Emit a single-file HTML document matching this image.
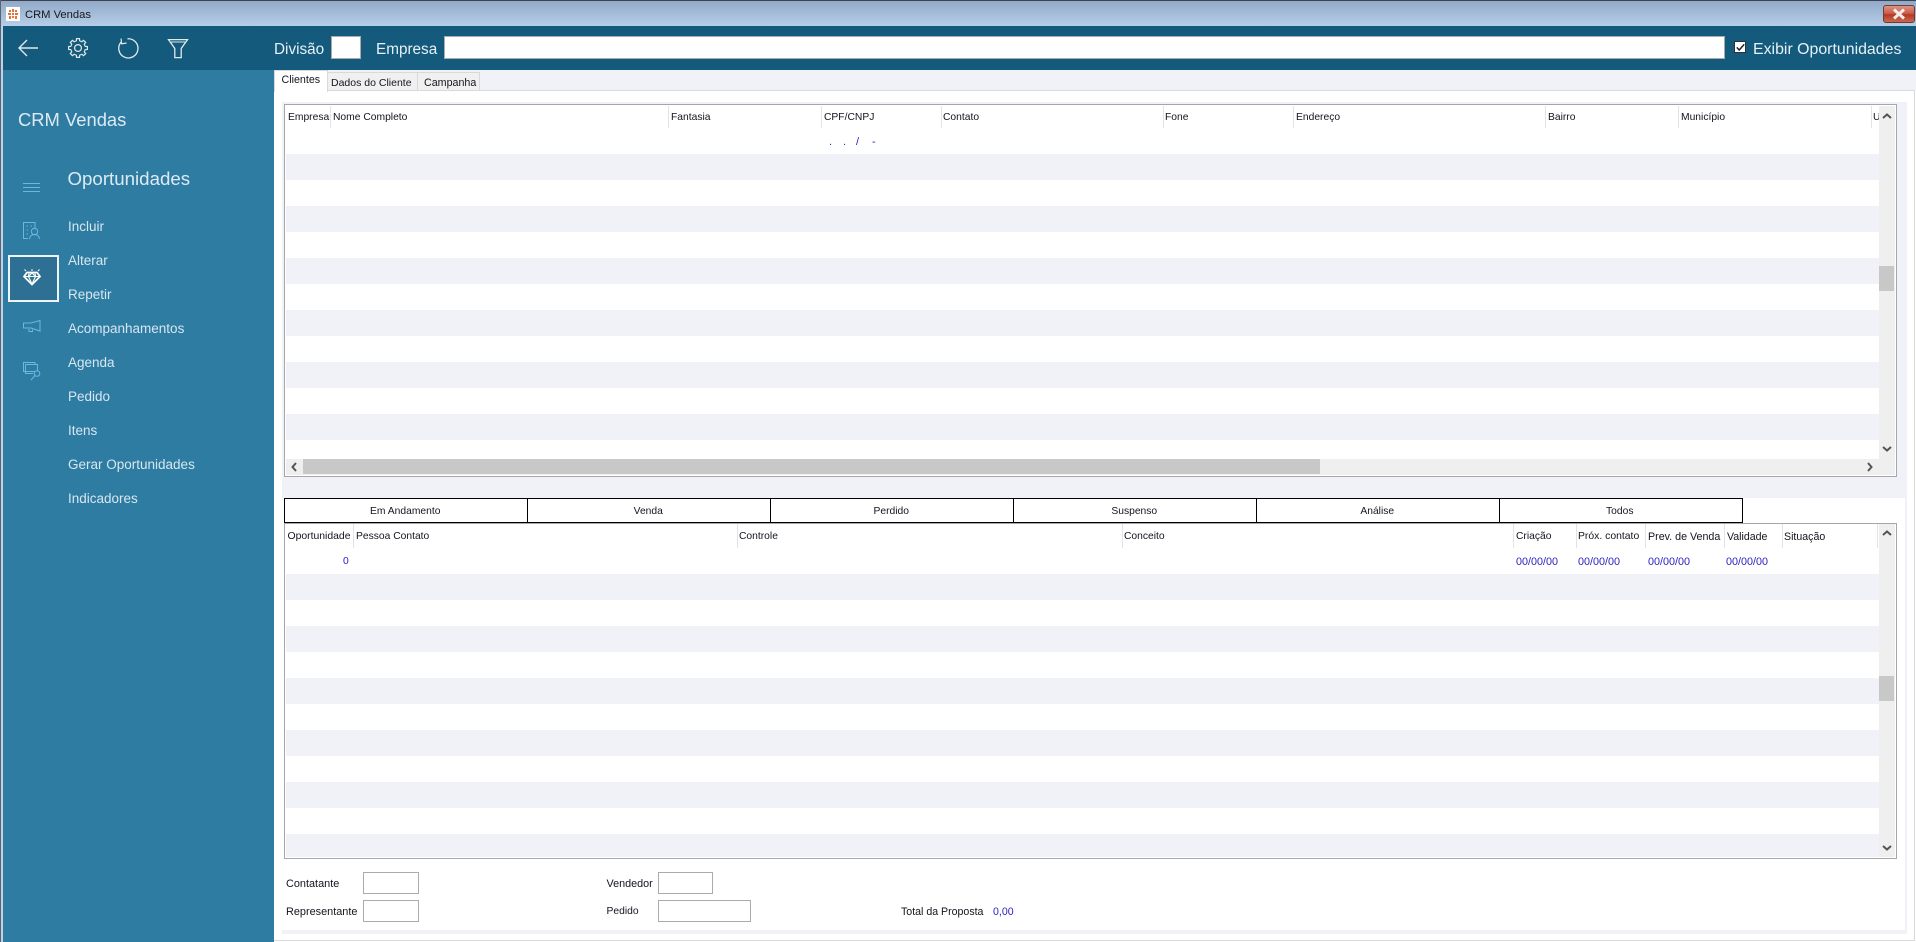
<!DOCTYPE html>
<html lang="pt"><head><meta charset="utf-8"><title>CRM Vendas</title>
<style>
html,body{margin:0;padding:0;background:#fff}
#a{position:relative;width:1916px;height:942px;overflow:hidden;background:#fff;font-family:"Liberation Sans",sans-serif}
#a div,#a span,#a svg{position:absolute}
.t{white-space:nowrap;font-size:10.3px;line-height:14px;height:14px;color:#14141e}
.b{color:#2a1fc0}
.d{font-size:10.8px}
.l{font-size:10.9px}
.s{white-space:nowrap;font-size:13.5px;line-height:18px;height:18px;color:#d6e7f0;left:68px;margin-top:1px}
.h{white-space:nowrap;line-height:20px;height:20px;color:#e6f1f6;font-size:15.3px}
.sep{width:1px;background:#e3e3e3}
.inp{background:#fff;border:1px solid #ababab;box-sizing:border-box}
.btn{box-sizing:border-box;border:1.5px solid #000;background:#fff;top:498px;height:24.5px;width:244.5px;text-align:center;font-size:10.3px;line-height:26px;color:#14141e;text-indent:-2px}
.f{background:#f1f2f8}
</style></head><body><div id="a">

<!-- window frame / title -->
<div style="left:0;top:0;width:1916px;height:26px;background:linear-gradient(#8fa8c6,#b7cee8)"></div>
<div style="left:0;top:0;width:1916px;height:1px;background:#3d4350"></div>
<div style="left:0;top:26px;width:3px;height:916px;background:#bcd2ea"></div>
<div style="left:0;top:0;width:1px;height:942px;background:#5a626e"></div>
<div style="left:6px;top:7px;width:14px;height:14px;background:#fff"></div>
<svg style="left:6px;top:7px" width="14" height="14" viewBox="0 0 14 14"><path d="M3 3h2v2H3zM6 2h2v3H6zM9 3h2v2H9zM2 6h3v2H2zM6 6h2v2H6zM9 6h3v2H9zM3 9h2v3H3zM6 9h2v2H6zM9 9h2v3H9z" fill="#e8703a"/></svg>
<div class="t" style="left:25px;top:8px;font-size:11.2px;color:#15181f">CRM Vendas</div>
<div style="left:1883px;top:5px;width:32px;height:18px;box-sizing:border-box;border:1px solid #6e3b36;border-radius:3px;background:linear-gradient(#dd9384 0,#c9604b 45%,#b43a24 55%,#c96a50 100%)"></div>
<svg style="left:1883px;top:5px" width="32" height="18" viewBox="0 0 32 18"><path d="M11 4.5 21 13.5M21 4.5 11 13.5" stroke="#f4ecea" stroke-width="3"/></svg>

<!-- header -->
<div style="left:3px;top:26px;width:1913px;height:44px;background:#145a7c"></div>
<svg style="left:0;top:26px" width="220" height="44" viewBox="0 26 220 44" fill="none" stroke="#e4e8ea">
<path d="M38 48H19M27 40 19 48 27 56" stroke-width="1.4"/>
<g transform="translate(78 48)" stroke-width="1.2">
<circle r="3.4"/>
<path d="M-2.76-6.65-1.66-7.21-1.49-9.38H1.49L1.66-7.21 2.76-6.65"/>
<path transform="rotate(45)" d="M-2.76-6.65-1.66-7.21-1.49-9.38H1.49L1.66-7.21 2.76-6.65"/>
<path transform="rotate(90)" d="M-2.76-6.65-1.66-7.21-1.49-9.38H1.49L1.66-7.21 2.76-6.65"/>
<path transform="rotate(135)" d="M-2.76-6.65-1.66-7.21-1.49-9.38H1.49L1.66-7.21 2.76-6.65"/>
<path transform="rotate(180)" d="M-2.76-6.65-1.66-7.21-1.49-9.38H1.49L1.66-7.21 2.76-6.65"/>
<path transform="rotate(225)" d="M-2.76-6.65-1.66-7.21-1.49-9.38H1.49L1.66-7.21 2.76-6.65"/>
<path transform="rotate(270)" d="M-2.76-6.65-1.66-7.21-1.49-9.38H1.49L1.66-7.21 2.76-6.65"/>
<path transform="rotate(315)" d="M-2.76-6.65-1.66-7.21-1.49-9.38H1.49L1.66-7.21 2.76-6.65"/>
</g>
<path d="M127.5 38.8A9.6 9.6 0 1 1 121 42.2" stroke-width="1.3"/>
<path d="M121 38.6 121.6 43.8 126.6 43" stroke-width="1.2"/>
<path d="M168.5 39.6H187.5L181.2 48.5V57.6H174.8V48.5Z" stroke-width="1.3"/>
<path d="M171 42H185" stroke-width="1"/>
</svg>
<div class="h" style="left:274px;top:40px">Divisão</div>
<div class="inp" style="left:331px;top:36px;width:30px;height:23px"></div>
<div class="h" style="left:376px;top:40px">Empresa</div>
<div class="inp" style="left:444px;top:36px;width:1281px;height:23px"></div>
<div style="left:1734px;top:41px;background:#fff;border:1px solid #28333c;width:10px;height:10px"></div>
<svg style="left:1734px;top:41px" width="13" height="13" viewBox="0 0 13 13"><path d="M2.8 6.4 5.2 9 10.2 3.4" fill="none" stroke="#222" stroke-width="1.5"/></svg>
<div class="h" style="left:1753px;top:40px;font-size:15.9px">Exibir Oportunidades</div>

<!-- sidebar -->
<div style="left:3px;top:70px;width:271px;height:872px;background:#2f7ca3"></div>
<div class="h" style="left:18px;top:109px;font-size:18.4px;line-height:22px;height:22px;color:#dcebf3">CRM Vendas</div>
<div class="h" style="left:67.5px;top:168px;font-size:18.7px;line-height:22px;height:22px;color:#dcebf3">Oportunidades</div>
<div style="left:8px;top:255px;width:51px;height:47px;box-sizing:border-box;border:2px solid #eef3f6;background:#2d7094"></div>
<svg style="left:0;top:170px" width="60" height="220" viewBox="0 170 60 220" fill="none" stroke="#6cb6e6" stroke-width="1">
<path d="M23 183.5H40M23 187.5H40M23 191.5H40"/>
<path d="M23.5 239V222.5H35V229M26.5 226h1.5M30.5 226h1.5M26.5 230h1.5M26.5 234h1.5M23.5 238.5H28"/>
<circle cx="34.5" cy="231.5" r="3.2"/>
<path d="M29.5 239C30 235.5 32 234.5 34.5 234.5S39 235.5 39.5 239"/>
<path d="M40 320.5 31 323H23.5V328H31L40 331ZM29 329V331.5H32.5V329.5"/>
<path d="M35 371.5H23.5V362.5H35V364.5M25.5 364.5H37.5V371M25.5 364.5V373.5H33"/>
<circle cx="37" cy="373.5" r="2.8"/>
<path d="M35 375.5 31 380"/>
</svg>
<svg style="left:23px;top:268px" width="18" height="18" viewBox="0 0 18 18" fill="none" stroke="#fff">
<path d="M4 4.5H14L17 8.5 9 16.5 1 8.5Z" stroke-width="1.8"/>
<path d="M1.5 8.5H16.5M6 5 5.5 8.5 9 16 12.5 8.5 12 5M5.5 8.5 9 5 12.5 8.5" stroke-width="1.1"/>
<path d="M1.5 1.5 3 3M16.5 1.5 15 3M9 1V3" stroke-width="1"/>
</svg>
<div class="s" style="top:217px">Incluir</div>
<div class="s" style="top:251px">Alterar</div>
<div class="s" style="top:285px">Repetir</div>
<div class="s" style="top:319px">Acompanhamentos</div>
<div class="s" style="top:353px">Agenda</div>
<div class="s" style="top:387px">Pedido</div>
<div class="s" style="top:421px">Itens</div>
<div class="s" style="top:455px">Gerar Oportunidades</div>
<div class="s" style="top:489px">Indicadores</div>

<!-- tab strip -->
<div class="f" style="left:274px;top:70px;width:1642px;height:20px"></div>
<div style="left:274px;top:90px;width:1641px;height:1px;background:#d9d9d9"></div>
<div style="left:1914px;top:90px;width:1px;height:851px;background:#d9d9d9"></div>
<div style="left:274px;top:940px;width:1641px;height:1px;background:#d9d9d9"></div>
<div style="left:327px;top:72px;width:91px;height:19px;box-sizing:border-box;background:#f0f0f0;border:1px solid #d9d9d9"></div>
<div style="left:418px;top:72px;width:62px;height:19px;box-sizing:border-box;background:#f0f0f0;border:1px solid #d9d9d9;border-left:0"></div>
<div style="left:274px;top:70px;width:54px;height:21.5px;box-sizing:border-box;background:#fff;border:1px solid #d9d9d9;border-bottom:0"></div>
<div class="t" style="left:281.5px;top:73px;font-size:10.7px">Clientes</div>
<div class="t" style="left:331px;top:76px;font-size:10.5px">Dados do Cliente</div>
<div class="t" style="left:424px;top:76px;font-size:10.7px">Campanha</div>

<!-- panel light strips -->
<div class="f" style="left:282px;top:102px;width:1625px;height:396px"></div>
<div class="f" style="left:1905px;top:498px;width:2px;height:436px"></div>
<div class="f" style="left:282px;top:930px;width:1625px;height:4px"></div>

<!-- grid 1 -->
<div style="left:284px;top:104px;width:1613px;height:372.5px;box-sizing:border-box;border:1.5px solid #a6a6ad;background:#fff"></div>
<div style="left:286px;top:128px;width:1592.5px;height:331px;background:repeating-linear-gradient(#fff 0,#fff 26px,#f1f2f8 26px,#f1f2f8 52px)"></div>
<div class="sep" style="left:330px;top:106px;height:22px"></div>
<div class="sep" style="left:668px;top:106px;height:22px"></div>
<div class="sep" style="left:821px;top:106px;height:22px"></div>
<div class="sep" style="left:941px;top:106px;height:22px"></div>
<div class="sep" style="left:1163px;top:106px;height:22px"></div>
<div class="sep" style="left:1293px;top:106px;height:22px"></div>
<div class="sep" style="left:1545px;top:106px;height:22px"></div>
<div class="sep" style="left:1678px;top:106px;height:22px"></div>
<div class="sep" style="left:1871px;top:106px;height:22px"></div>
<div class="t" style="left:288px;top:111px">Empresa</div>
<div class="t" style="left:333px;top:111px">Nome Completo</div>
<div class="t" style="left:671px;top:111px">Fantasia</div>
<div class="t" style="left:824px;top:111px">CPF/CNPJ</div>
<div class="t" style="left:943px;top:111px">Contato</div>
<div class="t" style="left:1165px;top:111px">Fone</div>
<div class="t" style="left:1296px;top:111px">Endereço</div>
<div class="t" style="left:1548px;top:111px">Bairro</div>
<div class="t" style="left:1681px;top:111px">Município</div>
<div style="left:1873px;top:111px;width:6px;height:14px;overflow:hidden"><span class="t" style="left:0;top:0">UF</span></div>
<div class="t b" style="left:829px;top:135px;font-size:11px">.</div>
<div class="t b" style="left:843px;top:135px;font-size:11px">.</div>
<div class="t b" style="left:856px;top:135px;font-size:11px">/</div>
<div class="t b" style="left:872px;top:135px;font-size:11px">-</div>
<!-- scrollbars -->
<div style="left:1879px;top:106px;width:16px;height:369px;background:#efefef"></div>
<div style="left:286px;top:459px;width:1609px;height:15.5px;background:#efefef"></div>
<div style="left:1879px;top:266px;width:15px;height:25px;background:#c8c8c8"></div>
<div style="left:303px;top:459px;width:1017px;height:15px;background:#c8c8c8"></div>
<svg style="left:1880px;top:109px" width="14" height="14" viewBox="0 0 14 14"><path d="M3 9 7 5.5 11 9" fill="none" stroke="#555" stroke-width="2"/></svg>
<svg style="left:1880px;top:442px" width="14" height="14" viewBox="0 0 14 14"><path d="M3 5 7 8.5 11 5" fill="none" stroke="#555" stroke-width="2"/></svg>
<svg style="left:287px;top:460px" width="14" height="14" viewBox="0 0 14 14"><path d="M9 3 5.5 7 9 11" fill="none" stroke="#555" stroke-width="2"/></svg>
<svg style="left:1863px;top:460px" width="14" height="14" viewBox="0 0 14 14"><path d="M5 3 8.5 7 5 11" fill="none" stroke="#555" stroke-width="2"/></svg>

<!-- status buttons -->
<div style="left:284px;top:498px;width:1621px;height:25px;background:#fff"></div>
<div class="btn" style="left:284px">Em Andamento</div>
<div class="btn" style="left:527px">Venda</div>
<div class="btn" style="left:770px">Perdido</div>
<div class="btn" style="left:1013px">Suspenso</div>
<div class="btn" style="left:1256px">Análise</div>
<div class="btn" style="left:1499px;width:243.5px">Todos</div>

<!-- grid 2 -->
<div style="left:284px;top:522.5px;width:1613px;height:336px;box-sizing:border-box;border:1.5px solid #a6a6ad;background:#fff"></div>
<div style="left:286px;top:548px;width:1592.5px;height:309px;background:repeating-linear-gradient(#fff 0,#fff 26px,#f1f2f8 26px,#f1f2f8 52px)"></div>
<div class="sep" style="left:353px;top:524px;height:24px"></div>
<div class="sep" style="left:737px;top:524px;height:24px"></div>
<div class="sep" style="left:1122px;top:524px;height:24px"></div>
<div class="sep" style="left:1513px;top:524px;height:24px"></div>
<div class="sep" style="left:1576px;top:524px;height:24px"></div>
<div class="sep" style="left:1645px;top:524px;height:24px"></div>
<div class="sep" style="left:1724px;top:524px;height:24px"></div>
<div class="sep" style="left:1782px;top:524px;height:24px"></div>
<div class="sep" style="left:1877px;top:524px;height:24px"></div>
<div class="t" style="left:287.5px;top:530px;font-size:10.4px">Oportunidade</div>
<div class="t" style="left:356px;top:530px">Pessoa Contato</div>
<div class="t" style="left:739px;top:530px">Controle</div>
<div class="t" style="left:1124px;top:530px">Conceito</div>
<div class="t" style="left:1516px;top:530px">Criação</div>
<div class="t" style="left:1578px;top:530px;font-size:10.4px">Próx. contato</div>
<div class="t" style="left:1648px;top:530px;font-size:10.7px">Prev. de Venda</div>
<div class="t" style="left:1727px;top:530px;font-size:10.6px">Validade</div>
<div class="t" style="left:1784px;top:530px;font-size:10.6px">Situação</div>
<div class="t b" style="left:343px;top:555px">0</div>
<div class="t b d" style="left:1516px;top:555px">00/00/00</div>
<div class="t b d" style="left:1578px;top:555px">00/00/00</div>
<div class="t b d" style="left:1648px;top:555px">00/00/00</div>
<div class="t b d" style="left:1726px;top:555px">00/00/00</div>
<div style="left:1879px;top:524px;width:16px;height:333px;background:#efefef"></div>
<div style="left:1879px;top:676px;width:15px;height:25px;background:#c8c8c8"></div>
<svg style="left:1880px;top:526px" width="14" height="14" viewBox="0 0 14 14"><path d="M3 9 7 5.5 11 9" fill="none" stroke="#555" stroke-width="2"/></svg>
<svg style="left:1880px;top:841px" width="14" height="14" viewBox="0 0 14 14"><path d="M3 5 7 8.5 11 5" fill="none" stroke="#555" stroke-width="2"/></svg>

<!-- bottom form -->
<div class="t l" style="left:286px;top:877px">Contatante</div>
<div class="inp" style="left:363px;top:872px;width:56px;height:22px"></div>
<div class="t l" style="left:286px;top:905px">Representante</div>
<div class="inp" style="left:363px;top:900px;width:56px;height:22px"></div>
<div class="t" style="left:606.5px;top:877px;font-size:10.8px">Vendedor</div>
<div class="inp" style="left:658px;top:872px;width:55px;height:22px"></div>
<div class="t" style="left:606.5px;top:905px">Pedido</div>
<div class="inp" style="left:658px;top:900px;width:93px;height:22px"></div>
<div class="t" style="left:901px;top:905px;font-size:10.6px">Total da Proposta</div>
<div class="t b" style="left:993px;top:905px;font-size:10.6px">0,00</div>
</div></body></html>
